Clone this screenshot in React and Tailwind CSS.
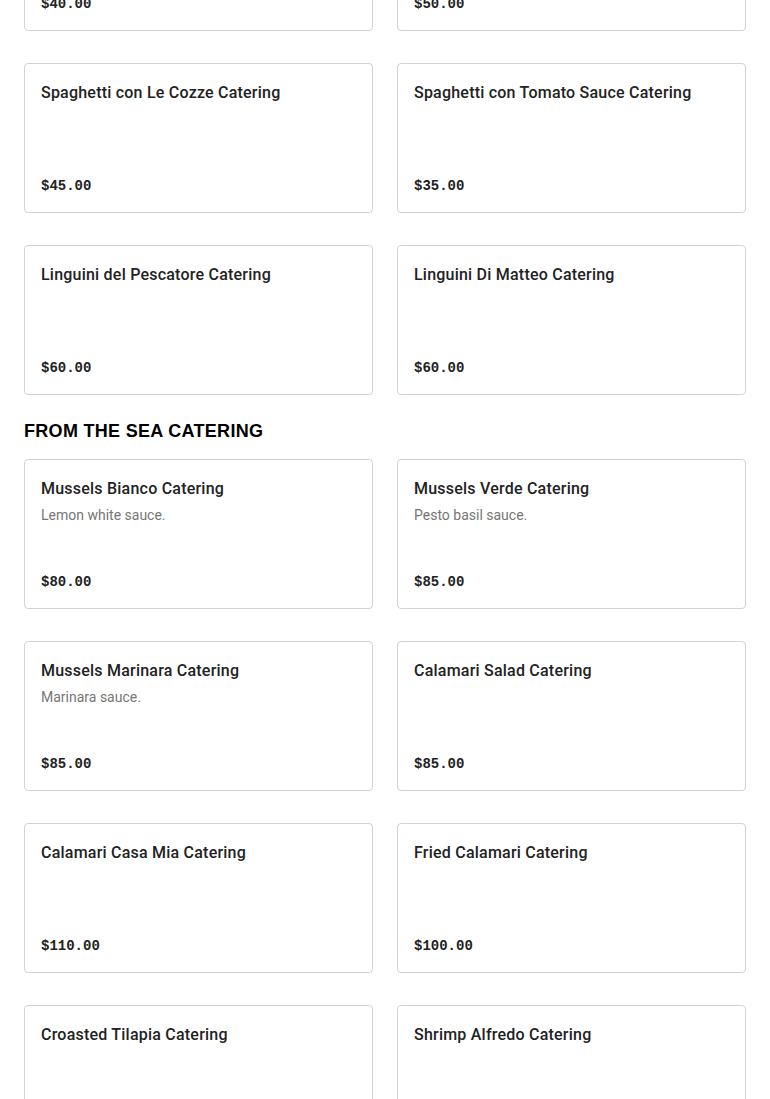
import React from "react";

const sections = [
  {
    title: null,
    items: [
      { name: "Penne alla Vodka Catering", price: "$40.00" },
      { name: "Rigatoni Bolognese Catering", price: "$50.00" },
      { name: "Spaghetti con Le Cozze Catering", price: "$45.00" },
      { name: "Spaghetti con Tomato Sauce Catering", price: "$35.00" },
      { name: "Linguini del Pescatore Catering", price: "$60.00" },
      { name: "Linguini Di Matteo Catering", price: "$60.00" },
    ],
  },
  {
    title: "From the Sea Catering",
    items: [
      { name: "Mussels Bianco Catering", desc: "Lemon white sauce.", price: "$80.00" },
      { name: "Mussels Verde Catering", desc: "Pesto basil sauce.", price: "$85.00" },
      { name: "Mussels Marinara Catering", desc: "Marinara sauce.", price: "$85.00" },
      { name: "Calamari Salad Catering", price: "$85.00" },
      { name: "Calamari Casa Mia Catering", price: "$110.00" },
      { name: "Fried Calamari Catering", price: "$100.00" },
      { name: "Croasted Tilapia Catering", price: "$95.00" },
      { name: "Shrimp Alfredo Catering", price: "$90.00" },
    ],
  },
];

function ItemCard({ item }) {
  return (
    <div className="h-[150px] rounded border border-[#d3d3d3] bg-white p-4 flex flex-col justify-between">
      <div className="pt-px">
        <h3 className="text-[16px] leading-6 font-medium tracking-[0.22px] text-[#222] font-['Roboto',sans-serif]">
          {item.name}
        </h3>
        {item.desc && (
          <p className="mt-[4px] text-[14px] leading-5 text-[#767676] font-['Roboto',sans-serif]">{item.desc}</p>
        )}
      </div>
      <p className="text-[14px] leading-5 font-bold text-[#222] font-['Liberation_Mono',monospace]">{item.price}</p>
    </div>
  );
}

export default function App() {
  return (
    <div className="bg-white min-h-screen overflow-hidden">
      <div className="px-6 -mt-[119px]">
        {sections.map((s, i) => (
          <section key={i} className={i > 0 ? "mt-6" : ""}>
            {s.title && (
              <h2 className="mb-4 text-[18px] leading-6 font-black uppercase tracking-[0.3px] text-black font-['Liberation_Sans',Arial,sans-serif]">
                {s.title}
              </h2>
            )}
            <div className="grid grid-cols-2 gap-x-6 gap-y-8">
              {s.items.map((item) => (
                <ItemCard key={item.name} item={item} />
              ))}
            </div>
          </section>
        ))}
      </div>
    </div>
  );
}
